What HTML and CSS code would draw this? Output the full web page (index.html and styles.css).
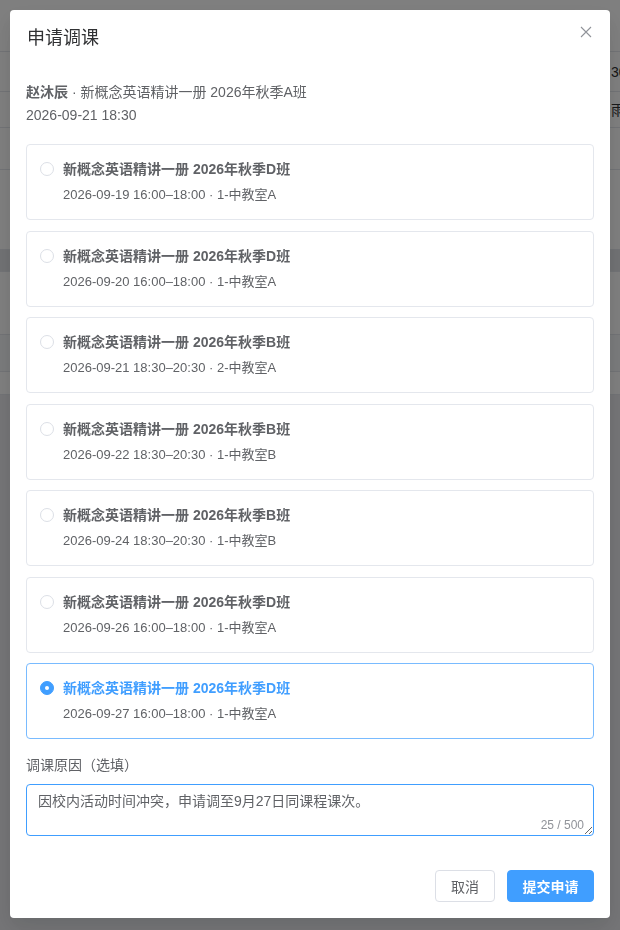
FILE: index.html
```html
<!DOCTYPE html>
<html lang="zh-CN">
<head>
<meta charset="utf-8">
<title>申请调课</title>
<link rel="stylesheet" href="styles.css">
</head>
<body>
<div class="page">
  <div class="prow prow-top"></div>
  <div class="prow prow-a"><span class="pcell">30</span></div>
  <div class="prow prow-b"><span class="pcell">雨</span></div>
  <div class="prow prow-c"></div>
  <div class="prow prow-d"></div>
  <div class="prow prow-head"></div>
  <div class="prow prow-e"></div>
  <div class="prow prow-f"></div>
  <div class="prow prow-g"></div>
  <div class="prow prow-rest"></div>
</div>
<div class="overlay">
  <div class="dialog">
    <div class="dialog-header">
      <span class="dialog-title">申请调课</span>
      <button class="close-btn" aria-label="关闭">
        <svg width="12" height="12" viewBox="0 0 12 12"><path d="M1 1 L11 11 M11 1 L1 11" stroke="#909399" stroke-width="1.1" fill="none"/></svg>
      </button>
    </div>
    <div class="dialog-body">
      <div class="info">
        <div class="info-line"><b class="stu">赵沐辰</b> · 新概念英语精讲一册 2026年秋季A班</div>
        <div class="info-line">2026-09-21 18:30</div>
      </div>
      <div class="options">
        <label class="option">
          <span class="radio"></span>
          <span class="opt-text">
            <span class="opt-title">新概念英语精讲一册 2026年秋季D班</span>
            <span class="opt-sub">2026-09-19 16:00–18:00 · 1-中教室A</span>
          </span>
        </label>
        <label class="option">
          <span class="radio"></span>
          <span class="opt-text">
            <span class="opt-title">新概念英语精讲一册 2026年秋季D班</span>
            <span class="opt-sub">2026-09-20 16:00–18:00 · 1-中教室A</span>
          </span>
        </label>
        <label class="option">
          <span class="radio"></span>
          <span class="opt-text">
            <span class="opt-title">新概念英语精讲一册 2026年秋季B班</span>
            <span class="opt-sub">2026-09-21 18:30–20:30 · 2-中教室A</span>
          </span>
        </label>
        <label class="option">
          <span class="radio"></span>
          <span class="opt-text">
            <span class="opt-title">新概念英语精讲一册 2026年秋季B班</span>
            <span class="opt-sub">2026-09-22 18:30–20:30 · 1-中教室B</span>
          </span>
        </label>
        <label class="option">
          <span class="radio"></span>
          <span class="opt-text">
            <span class="opt-title">新概念英语精讲一册 2026年秋季B班</span>
            <span class="opt-sub">2026-09-24 18:30–20:30 · 1-中教室B</span>
          </span>
        </label>
        <label class="option">
          <span class="radio"></span>
          <span class="opt-text">
            <span class="opt-title">新概念英语精讲一册 2026年秋季D班</span>
            <span class="opt-sub">2026-09-26 16:00–18:00 · 1-中教室A</span>
          </span>
        </label>
        <label class="option selected">
          <span class="radio"></span>
          <span class="opt-text">
            <span class="opt-title">新概念英语精讲一册 2026年秋季D班</span>
            <span class="opt-sub">2026-09-27 16:00–18:00 · 1-中教室A</span>
          </span>
        </label>
      </div>
      <div class="reason-label">调课原因（选填）</div>
      <div class="textarea-wrap">
        <textarea class="reason">因校内活动时间冲突，申请调至9月27日同课程课次。</textarea>
        <span class="count">25 / 500</span>
      </div>
    </div>
    <div class="dialog-footer">
      <button class="btn btn-default">取消</button>
      <button class="btn btn-primary">提交申请</button>
    </div>
  </div>
</div>
</body>
</html>
```

FILE: styles.css
```css
* { box-sizing: border-box; }
html, body { margin: 0; padding: 0; }
body {
  width: 620px;
  height: 930px;
  overflow: hidden;
  font-family: "Liberation Sans", "Noto Sans CJK SC", sans-serif;
  background: #f2f3f5;
}
.page {
  display: flex;
  flex-direction: column;
  height: 930px;
}
.prow {
  border-bottom: 1px solid #e4e7ed;
  background: #ffffff;
  position: relative;
}
.prow-top { height: 52px; }
.prow-a { height: 40px; }
.prow-b { height: 36px; }
.prow-c { height: 42px; }
.prow-d { height: 80px; }
.prow-head { height: 22px; background: #e2e4e8; }
.prow-e { height: 63px; }
.prow-f { height: 37px; background: #f5f6f8; }
.prow-g { height: 23px; }
.prow-rest { flex: 1; background: #eaebef; border-bottom: none; }
.pcell {
  display: block;
  padding-left: 611px;
  font-size: 14px;
  line-height: 40px;
  color: #303133;
  white-space: nowrap;
}
.prow-b .pcell { line-height: 36px; }

.overlay {
  position: fixed;
  inset: 0;
  background: rgba(0, 0, 0, 0.5);
  padding: 10px;
}
.dialog {
  background: #ffffff;
  border-radius: 4px;
  width: 600px;
  height: 908px;
  display: flex;
  flex-direction: column;
  box-shadow: 0 12px 32px 4px rgba(0,0,0,.04), 0 8px 20px rgba(0,0,0,.08);
}
.dialog-header {
  display: flex;
  justify-content: space-between;
  align-items: flex-start;
  padding: 17px 16px 0 17px;
  height: 60px;
}
.dialog-title {
  font-size: 18px;
  line-height: 22px;
  color: #303133;
}
.close-btn {
  border: none;
  background: none;
  padding: 0;
  margin-top: -3px;
  width: 16px;
  height: 16px;
  display: flex;
  align-items: center;
  justify-content: center;
  cursor: pointer;
}
.dialog-body {
  padding: 11px 16px 0 16px;
  flex: 1;
}
.info { margin-bottom: 17px; }
.info-line {
  font-size: 14px;
  line-height: 23px;
  color: #606266;
}
.stu { font-weight: 700; }
.options {
  display: flex;
  flex-direction: column;
  gap: 10.5px;
}
.option {
  display: flex;
  align-items: flex-start;
  gap: 9px;
  border: 1px solid #e4e7ed;
  border-radius: 4px;
  padding: 13px 13px;
  height: 76px;
  cursor: pointer;
}
.option.selected { border-color: #79bbff; }
.radio {
  flex: none;
  width: 14px;
  height: 14px;
  border: 1px solid #dcdfe6;
  border-radius: 50%;
  margin-top: 4px;
  background: #fff;
  position: relative;
}
.option.selected .radio {
  background: #409eff;
  border-color: #409eff;
}
.option.selected .radio::after {
  content: "";
  position: absolute;
  left: 50%;
  top: 50%;
  width: 4px;
  height: 4px;
  margin: -2px 0 0 -2px;
  border-radius: 50%;
  background: #fff;
}
.opt-text {
  display: flex;
  flex-direction: column;
  gap: 3px;
}
.opt-title {
  font-size: 14px;
  line-height: 22px;
  font-weight: 700;
  color: #606266;
}
.option.selected .opt-title { color: #409eff; }
.opt-sub {
  font-size: 13px;
  line-height: 23px;
  color: #606266;
}
.reason-label {
  margin-top: 16px;
  font-size: 14px;
  line-height: 20px;
  color: #606266;
  margin-bottom: 9px;
}
.textarea-wrap { position: relative; }
.reason {
  display: block;
  width: 100%;
  height: 52px;
  border: 1px solid #409eff;
  border-radius: 4px;
  padding: 5px 11px;
  font-family: "Liberation Sans", "Noto Sans CJK SC", sans-serif;
  font-size: 14px;
  line-height: 22px;
  color: #606266;
  resize: vertical;
  outline: none;
  background: #fff;
}
.count {
  position: absolute;
  right: 10px;
  bottom: 4px;
  font-size: 12px;
  line-height: 14px;
  color: #909399;
}
.dialog-footer {
  display: flex;
  justify-content: flex-end;
  gap: 12px;
  padding: 0 16px 16px;
}
.btn {
  height: 32px;
  padding: 0 15px;
  border-radius: 4px;
  font-family: "Liberation Sans", "Noto Sans CJK SC", sans-serif;
  font-size: 14px;
  cursor: pointer;
}
.btn-default {
  background: #fff;
  border: 1px solid #dcdfe6;
  color: #606266;
  width: 60px;
  padding: 0;
}
.btn-primary {
  background: #409eff;
  border: 1px solid #409eff;
  color: #fff;
  font-weight: 700;
  width: 87px;
  padding: 0;
}
```
